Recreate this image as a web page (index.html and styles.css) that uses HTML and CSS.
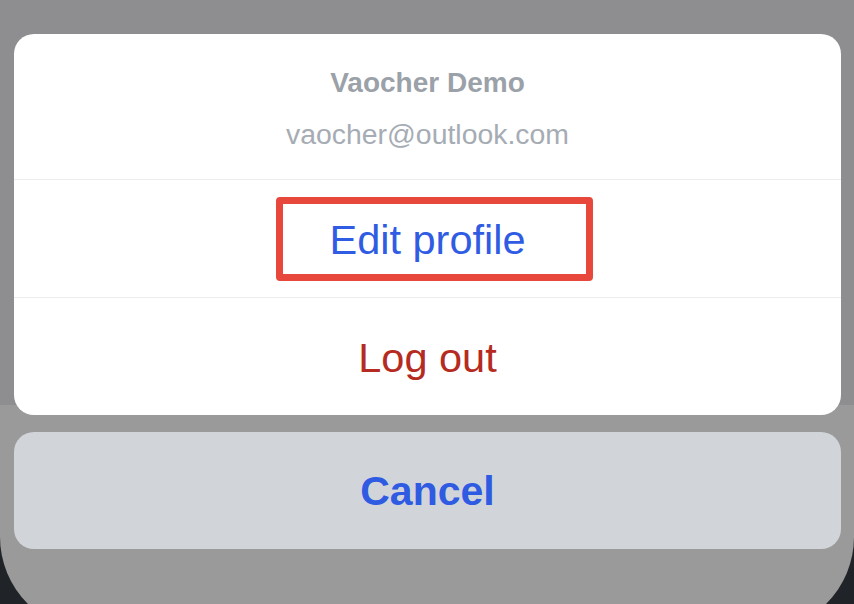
FILE: index.html
```html
<!DOCTYPE html>
<html lang="en">
<head>
<meta charset="utf-8">
<title>Account sheet</title>
<link rel="stylesheet" href="styles.css">
</head>
<body>
<div class="screen">
  <div class="sheet">
    <div class="card">
      <div class="header">
        <div class="name">Vaocher Demo</div>
        <div class="email">vaocher@outlook.com</div>
      </div>
      <div class="row row-edit">
        <span class="action action-blue">Edit profile</span>
        <div class="highlight"></div>
      </div>
      <div class="row">
        <span class="action action-red">Log out</span>
      </div>
    </div>
    <div class="cancel">Cancel</div>
  </div>
</div>
</body>
</html>
```

FILE: styles.css
```css
html, body {
  margin: 0;
  padding: 0;
}

body {
  width: 854px;
  height: 604px;
  overflow: hidden;
  background: #202327;
  font-family: "Liberation Sans", Arial, sans-serif;
}

.screen {
  width: 854px;
  height: 631px;
  box-sizing: border-box;
  padding: 34px 13px 0 14px;
  background: linear-gradient(#8e8e90 0, #8e8e90 405px, #9a9a9a 405px, #9a9a9a 100%);
  border-radius: 0 0 94px 94px;
}

.sheet {
  display: flex;
  flex-direction: column;
  gap: 17px;
}

.card {
  background: #ffffff;
  border-radius: 20px;
  overflow: hidden;
  display: flex;
  flex-direction: column;
}

.header {
  height: 146px;
  box-sizing: border-box;
  padding-top: 33px;
  display: flex;
  flex-direction: column;
  align-items: center;
  gap: 19px;
  border-bottom: 1px solid #ececee;
}

.name {
  font-size: 28px;
  line-height: 32px;
  font-weight: 700;
  color: #9ba1a9;
}

.email {
  font-size: 28.4px;
  line-height: 32px;
  color: #a6acb4;
}

.row {
  height: 117px;
  display: flex;
  align-items: center;
  justify-content: center;
  position: relative;
}

.row-edit {
  border-bottom: 1px solid #ececee;
}

.action {
  font-size: 41.5px;
  line-height: 48px;
  padding-top: 3px;
}

.action-blue {
  color: #2f5ce3;
}

.action-red {
  color: #b52b22;
}

.highlight {
  position: absolute;
  left: 262px;
  top: 17px;
  width: 317px;
  height: 84px;
  box-sizing: border-box;
  border: 7px solid #e8473b;
  border-radius: 4px;
}

.cancel {
  height: 117px;
  background: #d1d5da;
  border-radius: 20px;
  display: flex;
  align-items: center;
  justify-content: center;
  font-size: 41px;
  font-weight: 700;
  color: #2f5ae2;
  padding-top: 2px;
  box-sizing: border-box;
}
```
